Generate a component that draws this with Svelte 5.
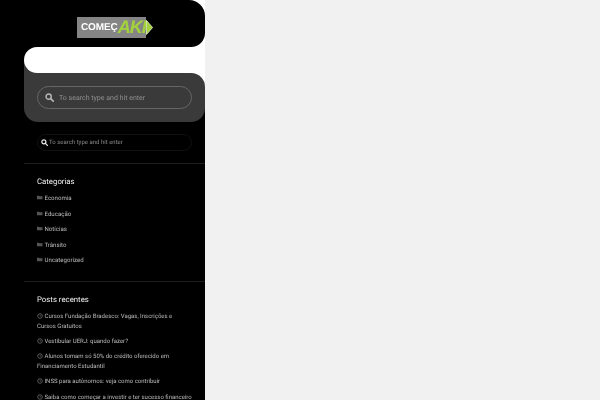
<script>
    const categories = ['Economia', 'Educação', 'Notícias', 'Trânsito', 'Uncategorized'];
    const posts = [
        'Cursos Fundação Bradesco: Vagas, Inscrições e Cursos Gratuitos',
        'Vestibular UERJ: quando fazer?',
        'Alunos tomam só 50% do crédito oferecido em Financiamento Estudantil',
        'INSS para autônomos: veja como contribuir',
        'Saiba como começar a investir e ter sucesso financeiro'
    ];
</script>

<div class="page">
    <aside class="sidebar">
        <header class="top">
            <div class="logo">
                <div class="plate">
                    <span class="come">COMEÇ</span><span class="aki">AKI</span>
                </div>
                <svg class="arrow" viewBox="0 0 8 18" width="7" height="17"><path d="M0.5 1 L7.5 9 L0.5 17 Z" fill="#a4d23c" stroke="#dfeebc" stroke-width="1" /></svg>
            </div>
        </header>

        <div class="band">
            <div class="white"></div>
        </div>

        <div class="panelwrap">
            <div class="panel">
                <div class="bigsearch">
                    <svg viewBox="0 0 16 16" width="9" height="9"><circle cx="6.5" cy="6.5" r="4.6" fill="none" stroke="#b5b5b5" stroke-width="2.6" /><path d="M10 10 L14.6 14.6" stroke="#b5b5b5" stroke-width="3" stroke-linecap="round" /></svg>
                    <span>To search type and hit enter</span>
                </div>
            </div>
        </div>

        <div class="rest">
            <div class="smallsearch">
                <svg viewBox="0 0 16 16" width="7" height="7"><circle cx="6.5" cy="6.5" r="4.6" fill="none" stroke="#e8e8e8" stroke-width="2.8" /><path d="M10 10 L14.6 14.6" stroke="#e8e8e8" stroke-width="3" stroke-linecap="round" /></svg>
                <span>To search type and hit enter</span>
            </div>

            <section class="widget cats-widget">
                <h3>Categorias</h3>
                <ul class="cats">
                    {#each categories as c}
                        <li>
                            <svg viewBox="0 0 12 9" width="6" height="5"><path d="M0 1 H4 L5 2 H11 V8 H0 Z" fill="#555" /></svg>
                            {c}
                        </li>
                    {/each}
                </ul>
            </section>

            <section class="widget posts-widget">
                <h3>Posts recentes</h3>
                <ul class="posts">
                    {#each posts as p}
                        <li>
                            <svg viewBox="0 0 12 12" width="6" height="6"><circle cx="6" cy="6" r="4.6" fill="none" stroke="#6c6c6c" stroke-width="1.6" /><path d="M6 3.5 V6 H8" fill="none" stroke="#6c6c6c" stroke-width="1.2" /></svg>
                            {p}
                        </li>
                    {/each}
                </ul>
            </section>
        </div>
    </aside>
</div>

<style>
    :global(body) {
        margin: 0;
        background: #f1f1f1;
    }

    .page {
        height: 400px;
        overflow: hidden;
        font-family: Roboto, "Liberation Sans", sans-serif;
        text-rendering: geometricPrecision;
    }

    .sidebar {
        width: 205px;
        height: 400px;
        overflow: hidden;
        background: #fff;
        color: #bcbcbc;
        will-change: transform;
    }

    .top {
        height: 47px;
        background: #000;
        border-radius: 0 16px 14px 0;
        display: flex;
        padding: 17px 0 0 77px;
        box-sizing: border-box;
    }

    .logo {
        height: 21px;
        display: flex;
        align-items: center;
    }

    .plate {
        width: 69px;
        height: 21px;
        background: #858585;
        display: flex;
        align-items: center;
        padding-left: 4px;
        box-sizing: border-box;
        font-family: "Liberation Sans", sans-serif;
        font-weight: 700;
    }

    .come {
        color: #fff;
        font-size: 10px;
        letter-spacing: -0.1px;
    }

    .aki {
        color: #a4d23c;
        font-size: 18px;
        font-style: italic;
        letter-spacing: -1px;
    }

    .band {
        height: 26px;
        padding-left: 24px;
        background: linear-gradient(#000 50%, #3a3a3a 50%) content-box, #000;
    }

    .white {
        height: 26px;
        background: #fff;
        border-radius: 13px 0 0 13px;
    }

    .panelwrap {
        padding-left: 24px;
        background: linear-gradient(#fff 50%, #000 50%) content-box, #000;
    }

    .panel {
        height: 49px;
        background: #3a3a3a;
        border-radius: 0 14px 14px 14px;
        padding: 13px 13px 0;
        box-sizing: border-box;
    }

    .bigsearch {
        height: 23px;
        box-sizing: border-box;
        border: 1px solid #666;
        border-radius: 12px;
        display: flex;
        align-items: center;
        gap: 5px;
        padding-left: 7px;
        font-size: 7px;
        color: #8f8f8f;
    }

    .rest {
        background: #000;
        height: 278px;
        padding: 12px 0 0 24px;
        box-sizing: border-box;
    }

    .smallsearch {
        margin: 0 13px;
        height: 17px;
        box-sizing: border-box;
        border: 1px solid #111;
        border-radius: 9px;
        display: flex;
        align-items: center;
        gap: 1px;
        padding-left: 3px;
        font-size: 6px;
        color: #8a8a8a;
    }

    .widget {
        border-top: 1px solid #1e1e1e;
        padding: 12px 13px 0 13px;
    }

    .cats-widget {
        margin-top: 12px;
        height: 105px;
    }

    h3 {
        margin: 0;
        font-size: 7.8px;
        font-weight: 400;
        color: #f0f0f0;
        line-height: 12px;
    }

    ul {
        list-style: none;
        margin: 0;
        padding: 0;
    }

    .cats {
        margin-top: 3px;
    }

    .cats li {
        font-size: 6.1px;
        line-height: 15.6px;
    }

    .posts {
        margin-top: 6px;
    }

    .posts li {
        font-size: 6px;
        line-height: 9.7px;
        margin-bottom: 5.6px;
    }

    .posts svg {
        vertical-align: -1px;
    }
</style>
